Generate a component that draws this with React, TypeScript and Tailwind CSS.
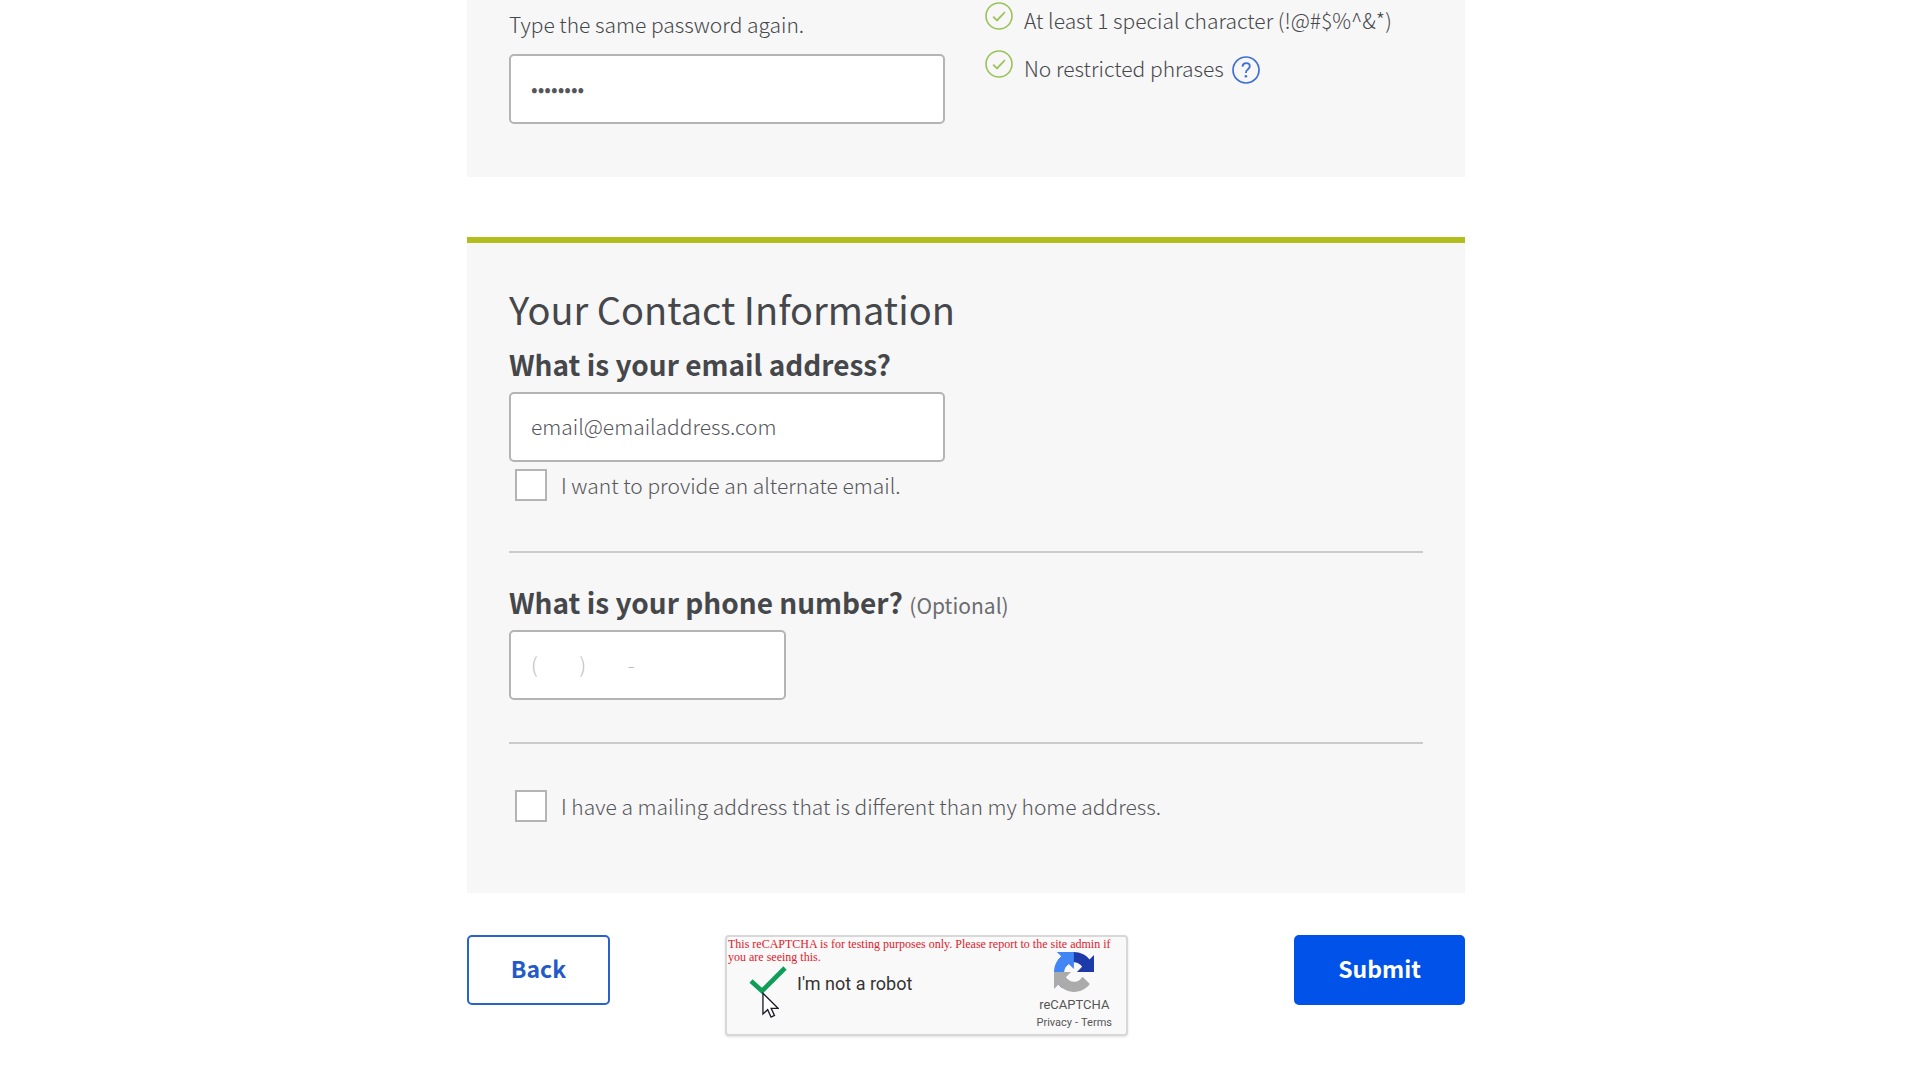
import { useState } from 'react';
import type { ReactNode } from 'react';

const requirements = [
  { id: 'special', text: 'At least 1 special character (!@#$%^&*)', help: false },
  { id: 'restricted', text: 'No restricted phrases', help: true },
];

const inputStyle =
  'block h-[70px] rounded-[5px] border-2 border-[#b4b4b4] bg-white px-5 pb-[3px] text-[21px] font-light text-[#55565a] outline-none';

function CheckCircle() {
  return (
    <svg className="mt-[2px] size-7 shrink-0" viewBox="0 0 28 28" fill="none" stroke="#9cc25a">
      <circle cx="14" cy="14" r="13" strokeWidth="1.6" />
      <path d="M8.2 14.6l3.8 3.8 8-8.4" strokeWidth="1.8" />
    </svg>
  );
}

function HelpCircle() {
  return (
    <svg className="size-7" viewBox="0 0 28 28" fill="none" stroke="#3d6fd6">
      <circle cx="14" cy="14" r="13" strokeWidth="1.7" />
      <path d="M10.4 10.6c.3-2.2 1.8-3.4 3.8-3.4 2.1 0 3.6 1.2 3.6 3.1 0 2.9-3.9 3.3-3.9 6.2v.6" strokeWidth="1.8" />
      <circle cx="13.9" cy="20.3" r="1.3" fill="#3d6fd6" stroke="none" />
    </svg>
  );
}

function RecaptchaLogo() {
  return (
    <svg className="size-10" viewBox="0 0 64 64">
      <path
        fill="#1c3aa9"
        d="M64 31.955l-.033-1.37V4.687l-7.16 7.16C50.948 4.674 42.033.093 32.05.093c-10.4 0-19.622 4.96-25.458 12.64l11.736 11.86a15.55 15.55 0 0 1 4.754-5.334c2.05-1.6 4.952-2.906 8.968-2.906.485 0 .86.057 1.135.163 4.976.393 9.288 3.14 11.828 7.124l-8.307 8.307L64 31.953"
      />
      <path
        fill="#4285f4"
        d="M31.862.094l-1.37.033H4.594l7.16 7.16C4.58 13.147 0 22.06 0 32.046c0 10.4 4.96 19.622 12.64 25.458L24.5 45.768a15.55 15.55 0 0 1-5.334-4.754c-1.6-2.05-2.906-4.952-2.906-8.968 0-.485.057-.86.163-1.135.393-4.976 3.14-9.288 7.124-11.828l8.307 8.307L31.86.095"
      />
      <path
        fill="#ababab"
        d="M.001 32.045l.033 1.37v25.898l7.16-7.16c5.86 7.173 14.774 11.754 24.76 11.754 10.4 0 19.622-4.96 25.458-12.64l-11.736-11.86a15.55 15.55 0 0 1-4.754 5.334c-2.05 1.6-4.952 2.906-8.968 2.906-.485 0-.86-.057-1.135-.163-4.976-.393-9.288-3.14-11.828-7.124l8.307-8.307-31.297.015"
      />
    </svg>
  );
}

function Cursor() {
  return (
    <svg className="pointer-events-none absolute top-[55px] left-[35px] h-[27px] w-[17px]" viewBox="0 0 18 28">
      <path d="M1 1v22l5-4.6 3.6 7.8 3.6-1.7-3.5-7.5H17z" fill="#fff" stroke="#1b1b2b" strokeWidth="1.4" />
    </svg>
  );
}

function Divider() {
  return <hr className="border-t-2 border-[#cbcbcb]" />;
}

interface CheckboxProps {
  id: string;
  children: ReactNode;
}

function Checkbox({ id, children }: CheckboxProps) {
  const [checked, setChecked] = useState(false);

  return (
    <div className="flex items-center gap-[14px] pl-[6px]">
      <input
        id={id}
        type="checkbox"
        checked={checked}
        onChange={() => setChecked(!checked)}
        className="size-8 shrink-0 appearance-none border-2 border-[#b4b4b4] bg-white checked:bg-[#0052e8]"
      />
      <label htmlFor={id} className="text-[21px] leading-8 font-light text-[#55565a]">
        {children}
      </label>
    </div>
  );
}

function Recaptcha() {
  return (
    <div className="relative h-[101px] w-[403px] rounded-[4px] border-2 border-[#d8d8d8] bg-[#f9f9f9] shadow-sm">
      <div className="flex h-full items-end justify-between pr-[14px] pl-[22px]">
        <div className="flex items-start gap-[10px] pb-8">
          <svg className="h-[28px] w-[38px]" viewBox="0 0 38 28" fill="none" stroke="#0f9d58" strokeWidth="4.6">
            <path d="M2 15l11 10L36 2" />
          </svg>
          <span className="font-[Roboto,sans-serif] text-[18px] leading-9 text-[#333333]">I'm not a robot</span>
        </div>
        <div className="flex flex-col items-center pb-1 font-[Roboto,sans-serif] text-[#555555]">
          <RecaptchaLogo />
          <span className="pt-[5px] text-[13px] leading-4">reCAPTCHA</span>
          <span className="flex gap-[3px] pt-[3px] text-[11px] leading-[14px]">
            <a href="#privacy">Privacy</a>
            <span>-</span>
            <a href="#terms">Terms</a>
          </span>
        </div>
      </div>
      <p className="absolute top-[1px] left-[1px] w-[394px] font-['Liberation_Serif',serif] text-[12px] leading-[13px] text-[#e0202c]">
        This reCAPTCHA is for testing purposes only. Please report to the site admin if you are seeing this.
      </p>
      <Cursor />
    </div>
  );
}

export default function App() {
  const [password, setPassword] = useState('password');
  const [email, setEmail] = useState('email@emailaddress.com');
  const [phone, setPhone] = useState('');

  return (
    <main className="min-h-screen bg-white pl-3 font-['Noto_Sans_CJK_JP',sans-serif] text-[#45474b]">
      <form className="mx-auto max-w-[998px]" onSubmit={(e) => e.preventDefault()}>
        {/* Password confirmation */}
        <section className="grid grid-cols-[436px_1fr] gap-10 bg-[#f7f7f7] px-[42px] pb-[53px]">
          <div className="pt-2">
            <label htmlFor="confirm" className="block pb-[14px] text-[21px] leading-8 font-light">
              Type the same password again.
            </label>
            <input
              id="confirm"
              type="password"
              value={password}
              onChange={(e) => setPassword(e.target.value)}
              className={`${inputStyle} w-full`}
            />
          </div>
          <ul>
            {requirements.map((item) => (
              <li key={item.id} className="flex h-12 items-start gap-[11px]">
                <CheckCircle />
                <span className="flex items-center gap-2 pt-1 text-[21px] leading-8 font-light">
                  {item.text}
                  {item.help && (
                    <button type="button" aria-label="Help" className="pt-[3px]">
                      <HelpCircle />
                    </button>
                  )}
                </span>
              </li>
            ))}
          </ul>
        </section>

        {/* Contact information */}
        <section className="mt-[60px] border-t-[6px] border-[#b2bd1e] bg-[#f7f7f7] px-[42px] pb-[71px]">
          <h2 className="pt-10 text-[38px] leading-[52px]">Your Contact Information</h2>
          <label htmlFor="email" className="block pt-[9px] pb-2 text-[28px] leading-[40px] font-bold">
            What is your email address?
          </label>
          <input
            id="email"
            type="email"
            value={email}
            onChange={(e) => setEmail(e.target.value)}
            className={`${inputStyle} w-[436px]`}
          />
          <div className="pt-[7px] pb-[50px]">
            <Checkbox id="alternate">I want to provide an alternate email.</Checkbox>
          </div>
          <Divider />
          <label htmlFor="phone" className="block pt-[29px] pb-[5px] text-[28px] leading-[40px] font-bold">
            What is your phone number? <span className="text-[21px] font-normal text-[#6b6c70]">(Optional)</span>
          </label>
          <input
            id="phone"
            type="tel"
            value={phone}
            placeholder="(         )         -"
            onChange={(e) => setPhone(e.target.value)}
            className={`${inputStyle} mb-[42px] w-[277px] placeholder:text-[#bdbdbd]`}
          />
          <Divider />
          <div className="pt-[46px]">
            <Checkbox id="mailing">I have a mailing address that is different than my home address.</Checkbox>
          </div>
        </section>

        <div className="flex items-start pt-[42px] pb-[43px]">
          <button
            type="button"
            className="h-[70px] w-[143px] rounded-[5px] border-2 border-[#2a62cb] bg-white pb-[3px] text-[23px] font-bold text-[#2459c9]"
          >
            Back
          </button>
          <div className="ml-[115px]">
            <Recaptcha />
          </div>
          <button
            type="submit"
            className="ml-auto h-[70px] w-[171px] rounded-[5px] bg-[#0052e8] pb-[3px] text-[23px] font-bold text-white"
          >
            Submit
          </button>
        </div>
      </form>
    </main>
  );
}
